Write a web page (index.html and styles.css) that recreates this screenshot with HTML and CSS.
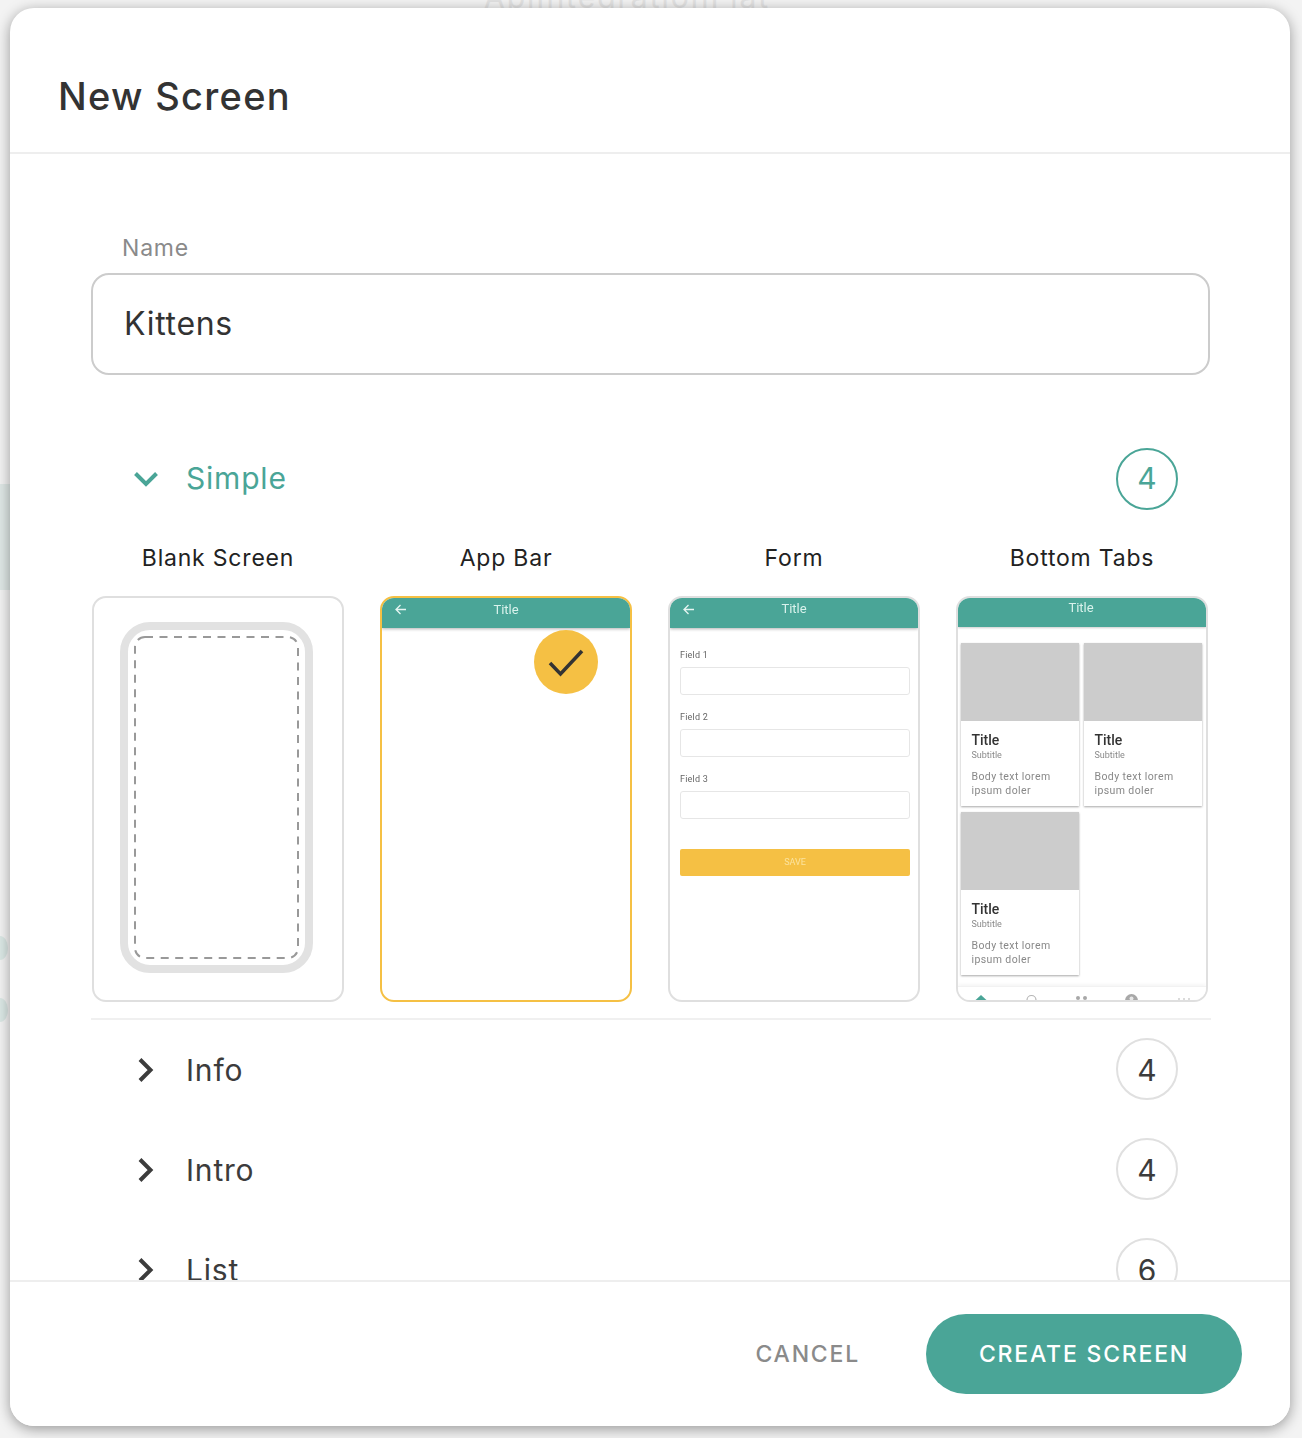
FILE: index.html
```html
<!DOCTYPE html>
<html lang="en">
<head>
  <meta charset="UTF-8" />
  <title>New Screen</title>
  <link rel="stylesheet" href="styles.css">
</head>
<body>
  <div class="backdrop">
    <div class="backdrop-title">ApiIntegrationFlat</div>
    <div class="backdrop-tint"></div>
    <div class="backdrop-dot dot-one"></div>
    <div class="backdrop-dot dot-two"></div>
  </div>

  <div class="modal">
    <header class="modal-header">
      <h1>New Screen</h1>
    </header>

    <div class="modal-body">
      <label class="field-label">Name</label>
      <div class="field-input">Kittens</div>

      <div class="section-row section-open">
        <svg class="chevron" width="24" height="24" viewBox="0 0 24 24"><path d="M1.500 6.500L12 17 22.500 6.500" /></svg>
        <span class="section-name">Simple</span>
        <span class="count">4</span>
      </div>

      <div class="templates">
        <div class="template">
          <div class="template-name">Blank Screen</div>
          <div class="thumb thumb-blank">
            <svg width="193" height="351" viewBox="0 0 193 351">
              <rect class="phone-frame" x="4" y="4" width="185" height="343" rx="26" />
              <rect class="phone-dash" x="15" y="15" width="163" height="321" rx="10" />
            </svg>
          </div>
        </div>

        <div class="template">
          <div class="template-name">App Bar</div>
          <div class="thumb thumb-selected">
            <div class="mini-bar">
              <svg class="mini-back" width="13" height="13" viewBox="0 0 13 13"><path d="M12 6.500H2M6.500 2L2 6.500 6.500 11" /></svg>
              <span>Title</span>
            </div>
            <div class="selected-badge">
              <svg width="64" height="64" viewBox="0 0 64 64"><path d="M16 33l10.500 11L48 21" /></svg>
            </div>
          </div>
        </div>

        <div class="template">
          <div class="template-name">Form</div>
          <div class="thumb">
            <div class="mini-bar">
              <svg class="mini-back" width="13" height="13" viewBox="0 0 13 13"><path d="M12 6.500H2M6.500 2L2 6.500 6.500 11" /></svg>
              <span>Title</span>
            </div>
            <div class="mini-form">
              <div class="mini-label">Field 1</div>
              <div class="mini-input"></div>
              <div class="mini-label">Field 2</div>
              <div class="mini-input"></div>
              <div class="mini-label">Field 3</div>
              <div class="mini-input"></div>
              <div class="mini-save">SAVE</div>
            </div>
          </div>
        </div>

        <div class="template">
          <div class="template-name">Bottom Tabs</div>
          <div class="thumb">
            <div class="mini-bar mini-bar-tabs"><span>Title</span></div>
            <div class="mini-cards">
              <div class="mini-card">
                <div class="mini-image"></div>
                <div class="mini-card-title">Title</div>
                <div class="mini-card-sub">Subtitle</div>
                <div class="mini-card-text">Body text lorem ipsum doler</div>
              </div>
              <div class="mini-card">
                <div class="mini-image"></div>
                <div class="mini-card-title">Title</div>
                <div class="mini-card-sub">Subtitle</div>
                <div class="mini-card-text">Body text lorem ipsum doler</div>
              </div>
              <div class="mini-card">
                <div class="mini-image"></div>
                <div class="mini-card-title">Title</div>
                <div class="mini-card-sub">Subtitle</div>
                <div class="mini-card-text">Body text lorem ipsum doler</div>
              </div>
            </div>
            <div class="mini-tabs">
              <svg width="250" height="16" viewBox="0 0 250 16">
                <path class="tab-home" d="M16.500 14L23 8l6.500 6z" />
                <circle class="tab-search" cx="73.500" cy="13" r="4.500" />
                <circle class="tab-fill" cx="120" cy="11" r="2" />
                <circle class="tab-fill" cx="127" cy="11" r="2" />
                <circle class="tab-fill" cx="173.500" cy="13.500" r="6.500" />
                <circle class="tab-head" cx="173.500" cy="11.500" r="2" />
                <circle class="tab-light" cx="221" cy="12" r="1" />
                <circle class="tab-light" cx="226" cy="12" r="1" />
                <circle class="tab-light" cx="231" cy="12" r="1" />
              </svg>
            </div>
          </div>
        </div>
      </div>

      <div class="section-divider"></div>

      <div class="section-row">
        <svg class="chevron" width="24" height="24" viewBox="0 0 24 24"><path d="M6 1.500L16.500 12 6 22.500" /></svg>
        <span class="section-name">Info</span>
        <span class="count">4</span>
      </div>
      <div class="section-row">
        <svg class="chevron" width="24" height="24" viewBox="0 0 24 24"><path d="M6 1.500L16.500 12 6 22.500" /></svg>
        <span class="section-name">Intro</span>
        <span class="count">4</span>
      </div>
      <div class="section-row">
        <svg class="chevron" width="24" height="24" viewBox="0 0 24 24"><path d="M6 1.500L16.500 12 6 22.500" /></svg>
        <span class="section-name">List</span>
        <span class="count">6</span>
      </div>
    </div>

    <footer class="modal-footer">
      <button class="btn-cancel">CANCEL</button>
      <button class="btn-create">CREATE SCREEN</button>
    </footer>
  </div>
</body>
</html>
```

FILE: styles.css
```css
body {
  margin: 0;
  height: 1438px;
  overflow: hidden;
  box-sizing: border-box;
  padding: 8px 12px 12px 10px;
  background: #f3f3f3;
  font-family: Inter, "Open Sans", sans-serif;
  color: #333;
}

.backdrop-title {
  position: absolute;
  top: -21px; left: 484px;
  font-size: 30px;
  letter-spacing: 2px;
  color: #e2e2e2;
  white-space: nowrap;
}
.backdrop-tint {
  position: absolute;
  top: 484px; left: 0;
  width: 10px; height: 106px;
  background: #dfe8e6;
}
.backdrop-dot {
  position: absolute;
  left: -8px;
  width: 16px; height: 24px;
  border-radius: 50%;
  background: #dbe8e5;
}
.dot-one { top: 936px; }
.dot-two { top: 998px; }

.modal {
  position: relative;
  height: 1418px;
  display: flex;
  flex-direction: column;
  background: white;
  border-radius: 24px;
  box-shadow: 0 3px 14px rgba(0,0,0,0.38);
  overflow: hidden;
}

.modal-header {
  flex: none;
  height: 146px;
  padding: 31px 0 0 48px;
  display: flex;
  align-items: center;
  border-bottom: 2px solid #eeeeee;
  box-sizing: border-box;
}
.modal-header h1 {
  margin: 0;
  font-size: 38px;
  font-weight: 500;
  letter-spacing: 1.300px;
  color: #333;
}

.modal-body {
  flex: 1;
  min-height: 0;
  overflow: hidden;
  padding: 79px 80px 0 81px;
}

.field-label {
  display: block;
  margin-left: 31px;
  height: 40px;
  line-height: 30px;
  font-size: 23px;
  letter-spacing: 0.800px;
  color: #8a8a8a;
}
.field-input {
  height: 96px;
  padding: 0 0 2px 31px;
  display: flex;
  align-items: center;
  border: 2px solid #cccccc;
  border-radius: 18px;
  font-size: 32px;
  letter-spacing: 0.700px;
  color: #333;
}

.section-row {
  height: 100px;
  display: flex;
  align-items: center;
  padding: 0 32px 0 43px;
  font-size: 30px;
  color: #3c3c3c;
}
.section-open {
  margin-top: 73px;
  height: 62px;
  color: #4aa597;
}
.section-name {
  margin-left: 28px;
  flex: 1;
  letter-spacing: 0.800px;
}
.section-open .section-name {
  margin-bottom: 2px;
}
.chevron path {
  fill: none;
  stroke: currentColor;
  stroke-width: 4;
}
.count {
  width: 62px; height: 62px;
  box-sizing: border-box;
  margin-bottom: 2px;
  padding-top: 2px;
  display: flex;
  align-items: center;
  justify-content: center;
  border: 2px solid #e0e0e0;
  border-radius: 50%;
}
.section-open .count {
  margin-bottom: 0;
  padding: 0 0 2px;
  border-color: #4aa597;
}

.templates {
  display: flex;
  gap: 36px;
  margin: 20px 0 0 1px;
}
.template {
  width: 252px;
}
.template-name {
  height: 66px;
  line-height: 56px;
  text-align: center;
  font-size: 23px;
  letter-spacing: 0.800px;
  color: #222;
}

.thumb {
  position: relative;
  height: 406px;
  box-sizing: border-box;
  border: 2px solid #dfdfdf;
  border-radius: 14px;
  overflow: hidden;
  background: white;
  font-family: Roboto, sans-serif;
}
.thumb-selected {
  border-color: #f5c044;
}
.thumb-blank {
  display: flex;
  justify-content: center;
  padding-top: 24px;
  padding-right: 4px;
}
.thumb-blank svg {
  margin-left: 1px;
  filter: blur(0.5px);
}
.phone-frame {
  fill: none;
  stroke: #e2e2e2;
  stroke-width: 8;
}
.phone-dash {
  fill: none;
  stroke: #999;
  stroke-width: 2;
  stroke-dasharray: 8 6.500;
}

.mini-bar {
  position: relative;
  height: 30px;
  display: flex;
  align-items: center;
  justify-content: center;
  background: #4aa597;
  color: #d9f2ec;
  font-size: 13px;
  box-shadow: 0 1px 3px rgba(0,0,0,0.3);
  filter: blur(0.4px);
}
.mini-bar span {
  margin-bottom: 10px;
}
.thumb-selected .mini-bar span {
  margin-bottom: 8px;
}
.mini-bar-tabs {
  height: 29px;
  box-shadow: 0 1px 2px rgba(0,0,0,0.2);
  padding-right: 2px;
}
.mini-back {
  position: absolute;
  left: 12px; top: 5px;
}
.mini-back path {
  fill: none;
  stroke: #e6f5f2;
  stroke-width: 1.300;
}

.selected-badge {
  position: absolute;
  left: 152px; top: 32px;
  width: 64px; height: 64px;
  border-radius: 50%;
  background: #f5c044;
}
.selected-badge path {
  fill: none;
  stroke: #333;
  stroke-width: 3.500;
}

.mini-form {
  padding: 20px 8px 0 10px;
  filter: blur(0.4px);
}
.mini-label {
  height: 19px;
  line-height: 14px;
  font-size: 9px;
  color: #666;
  letter-spacing: 0.2px;
}
.mini-input {
  height: 26px;
  margin-bottom: 15px;
  border: 1px solid #e6e6e6;
  border-radius: 3px;
}
.mini-save {
  margin-top: 30px;
  height: 27px;
  line-height: 26px;
  text-align: center;
  background: #f5c044;
  border-radius: 2px;
  font-size: 9px;
  color: #fbe39e;
}

.mini-cards {
  display: grid;
  grid-template-columns: 118px 118px;
  gap: 6px 5px;
  padding: 16px 0 0 3px;
  filter: blur(0.4px);
}
.mini-card {
  height: 163px;
  box-shadow: 0 1px 2px rgba(0,0,0,0.35);
  overflow: hidden;
}
.mini-image {
  height: 78px;
  background: #cccccc;
}
.mini-card-title {
  margin: 11px 0 0 10.500px;
  line-height: 16px;
  font-size: 14px;
  font-weight: 500;
  color: #333;
}
.mini-card-sub {
  margin: 1px 0 0 10.500px;
  line-height: 13px;
  font-size: 9px;
  color: #8a8a8a;
}
.mini-card-text {
  margin: 8px 8px 0 10.500px;
  line-height: 14px;
  font-size: 10.500px;
  letter-spacing: 0.4px;
  color: #888;
}

.mini-tabs {
  position: absolute;
  left: 0; bottom: 0;
  width: 100%;
  height: 13px;
  background: white;
  border-top: 1px solid #f2f2f2;
  box-shadow: 0 -2px 3px rgba(0,0,0,0.04);
  filter: blur(0.4px);
}
.mini-tabs svg {
  display: block;
}
.tab-home { fill: #4aa597; }
.tab-search { fill: none; stroke: #b5b5b5; stroke-width: 1.200; }
.tab-fill { fill: #a8a8a8; }
.tab-head { fill: #e8e8e8; }
.tab-light { fill: #cfcfcf; }

.section-divider {
  height: 2px;
  margin-top: 16px;
  margin-right: -1px;
  background: #f0f0f0;
}

.modal-footer {
  flex: none;
  height: 146px;
  box-sizing: border-box;
  border-top: 2px solid #eeeeee;
  padding: 32px 48px 0 0;
  display: flex;
  justify-content: flex-end;
  align-items: flex-start;
  background: white;
}
.modal-footer button {
  border: none;
  background: none;
  font-family: inherit;
  font-size: 23px;
  font-weight: 500;
  letter-spacing: 1.800px;
  cursor: pointer;
}
.modal-footer .btn-cancel {
  height: 80px;
  margin-right: 66px;
  padding: 0;
  color: #8a8a8a;
}
.modal-footer .btn-create {
  width: 316px;
  height: 80px;
  padding: 0;
  border-radius: 40px;
  background: #4aa597;
  color: white;
}
```
